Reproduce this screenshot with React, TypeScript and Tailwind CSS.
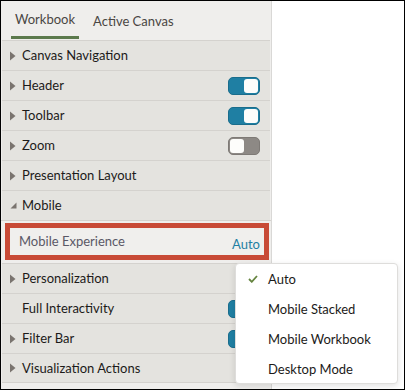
import React from "react";

const font = { fontFamily: "Lato, 'Noto Sans', sans-serif" };

function RightArrow() {
  return (
    <svg width="6" height="10" viewBox="0 0 6 10" className="block">
      <polygon points="0,0.5 5.5,5 0,9.5" fill="#7a746f" />
    </svg>
  );
}

function DownArrow() {
  return (
    <svg width="7" height="7" viewBox="0 0 7 7" className="block">
      <polygon points="6.5,0.5 6.5,6.5 0.5,6.5" fill="#7a746f" />
    </svg>
  );
}

function Toggle({ on }: { on: boolean }) {
  return on ? (
    <div className="w-[32px] h-[18px] rounded-[5px] bg-[#1f7fa3] border border-[#1a6d8c] flex items-center justify-end pr-[1px]">
      <div className="w-[14px] h-[14px] rounded-[3px] bg-[#fdfdfb]" />
    </div>
  ) : (
    <div className="w-[32px] h-[18px] rounded-[5px] bg-[#8d8985] border border-[#7e7a76] flex items-center justify-start pl-[1px]">
      <div className="w-[14px] h-[14px] rounded-[3px] bg-[#fdfdfb]" />
    </div>
  );
}

type RowProps = { label: string; arrow?: "right" | "down" | "none"; toggle?: "on" | "off"; last?: boolean };

function Row({ label, arrow = "right", toggle, last }: RowProps) {
  return (
    <div
      className={
        "h-[30px] border-t border-[#d4d2ce] bg-[#e4e3df] mx-[1px] flex items-center pl-[8px] pr-[10px] " +
        (last ? "border-b" : "")
      }
    >
      <div className="w-[12px] flex items-center">
        {arrow === "right" && <RightArrow />}
        {arrow === "down" && <DownArrow />}
      </div>
      <div className="flex-1 text-[13px] text-[#1c1a19] leading-none">{label}</div>
      {toggle && <Toggle on={toggle === "on"} />}
    </div>
  );
}

export default function App() {
  return (
    <div
      className="relative w-[405px] h-[390px] border border-black bg-white flex box-border overflow-hidden"
      style={font}
    >
      <div className="w-[271px] h-full bg-[#efeeec] border-r border-[#d9d8d6] flex flex-col">
        <div className="h-[39px] flex items-start shrink-0">
          <div className="ml-[10px] px-[4px] h-[38px] pt-[3px] flex items-center border-b-[3px] border-[#5c7a4d] text-[13px] text-[#4a4643]">
            Workbook
          </div>
          <div className="ml-[10px] px-[4px] h-[38px] pt-[3px] flex items-center text-[13px] text-[#4a4643]">
            Active Canvas
          </div>
        </div>
        <Row label="Canvas Navigation" />
        <Row label="Header" toggle="on" />
        <Row label="Toolbar" toggle="on" />
        <Row label="Zoom" toggle="off" />
        <Row label="Presentation Layout" />
        <Row label="Mobile" arrow="down" />
        <div className="h-[43px] border-t border-[#d4d2ce] pt-[2px] pl-[4px] pr-[2px]">
          <div className="h-[37px] border-[5px] border-[#c84a36] bg-[#f0efed] flex items-center pl-[9px] pr-[4px]">
            <div className="flex-1 text-[13px] text-[#5a5866] leading-none">Mobile Experience</div>
            <div className="text-[13px] text-[#1f7fa3] leading-none mt-[6px]">Auto</div>
          </div>
        </div>
        <Row label="Personalization" />
        <Row label="Full Interactivity" arrow="none" toggle="on" />
        <Row label="Filter Bar" toggle="on" />
        <Row label="Visualization Actions" last />
      </div>

      <div className="absolute left-[234px] top-[262px] w-[163px] h-[121px] bg-white border border-[#dedddb] rounded-[4px] shadow-[0_2px_6px_rgba(0,0,0,0.12)]">
        {["Auto", "Mobile Stacked", "Mobile Workbook", "Desktop Mode"].map((t, i) => (
          <div key={t} className="h-[30px] flex items-center pl-[12px]">
            <div className="w-[20px] flex items-center">
              {i === 0 && (
                <svg width="10" height="8" viewBox="0 0 10 8" className="block">
                  <polyline points="1,4 3.8,6.8 9,1" fill="none" stroke="#65843f" strokeWidth="1.8" />
                </svg>
              )}
            </div>
            <div className="text-[13px] text-[#1c1a19] leading-none">{t}</div>
          </div>
        ))}
      </div>
    </div>
  );
}
